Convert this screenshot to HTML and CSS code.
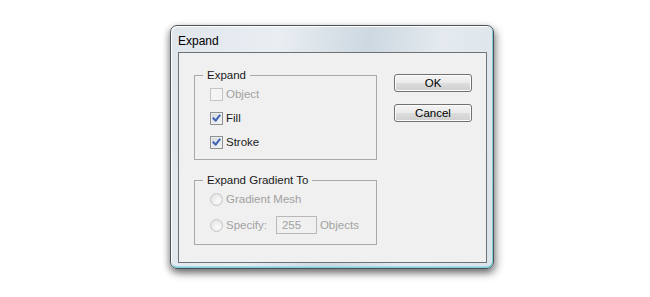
FILE: index.html
```html
<!DOCTYPE html>
<html lang="en">
<head>
  <meta charset="UTF-8"/>
  <title>Expand</title>
  <link rel="stylesheet" href="styles.css">
</head>
<body>
  <div class="window">
    <div class="title">Expand</div>
    <div class="client">
      <div class="groups">
        <fieldset class="group group-expand">
          <legend>Expand</legend>
          <div class="row disabled"><span class="check"></span>Object</div>
          <div class="row"><span class="check checked"></span>Fill</div>
          <div class="row"><span class="check checked"></span>Stroke</div>
        </fieldset>
        <fieldset class="group group-gradient">
          <legend>Expand Gradient To</legend>
          <div class="row disabled"><span class="radio"></span>Gradient Mesh</div>
          <div class="row row-specify disabled">
            <span class="radio"></span>Specify:
            <span class="field">255</span>Objects
          </div>
        </fieldset>
      </div>
      <div class="buttons">
        <button>OK</button>
        <button>Cancel</button>
      </div>
    </div>
  </div>
</body>
</html>
```

FILE: styles.css
```css
html, body { margin:0; background:#fff; }
body { padding:25px 0 0 170px; height:297px; box-sizing:border-box; font-family:"Liberation Sans", Arial, sans-serif; font-size:11.5px; color:#1a1a1a; }

.window { width:324px; height:244px; box-sizing:border-box; padding:0 6px 6px 7px; border:1px solid #4c5358; border-radius:7px;
  background:linear-gradient(100deg, #dfe6ec 0%, #e9eef2 30%, #cdd8e1 55%, #e4eaef 75%, #dbe4ea 100%);
  box-shadow:inset 1px 1px 0 #fff, inset -1px -1px 0 #7fd0de, inset 0 -2px 0 #a9dbe4, 2px 4px 9px rgba(0,0,0,0.45), -2px 3px 6px rgba(0,0,0,0.25); }
.title { height:26px; line-height:30px; font-size:12px; color:#000; }

.client { height:211px; box-sizing:border-box; border:1px solid #6e7378; background:#f0f0f0; display:flex; padding:15px 0 0 15px; }

.groups { width:183px; display:flex; flex-direction:column; gap:13px; }
.group { margin:0; padding:0 8px 5px; border:1px solid #a8a8a8; min-width:0; }
.group legend { padding:0 4px; line-height:14px; }
.row { display:flex; align-items:center; height:24px; margin-left:7px; }
.row.disabled { color:#a2a2a2; }
.row-specify { height:28px; }

.check { width:11px; height:11px; margin-right:3px; border:1px solid #8e8f8f; background:linear-gradient(135deg, #cfd6de, #f6f8fa); box-shadow:inset 0 0 0 1px #eef0f2; position:relative; }
.disabled .check { border-color:#c4c4c4; background:#f4f4f4; box-shadow:none; }
.check.checked::after { content:""; position:absolute; left:3px; top:0; width:3px; height:6px; border:solid #3f63b0; border-width:0 2px 2px 0; transform:rotate(40deg); }

.radio { width:11px; height:11px; margin-right:3px; border:1px solid #c6c6c6; border-radius:50%; background:radial-gradient(circle at 60% 65%, #fbfbfb, #dedede); }

.field { display:inline-block; box-sizing:border-box; width:41px; height:18px; line-height:16px; margin:0 3px 0 9px; padding-left:5px; border:1px solid #b9b9b9; background:#f0f0f0; }

.buttons { display:flex; flex-direction:column; gap:12px; margin:6px 0 0 17px; }
.buttons button { width:78px; height:18px; padding:0; font:inherit; color:#000; border:1px solid #707070; border-radius:3px;
  background:linear-gradient(#f3f3f3 0%, #ebebeb 49%, #dddddd 50%, #cfcfcf 100%); box-shadow:inset 0 0 0 1px #fcfcfc; }
```
